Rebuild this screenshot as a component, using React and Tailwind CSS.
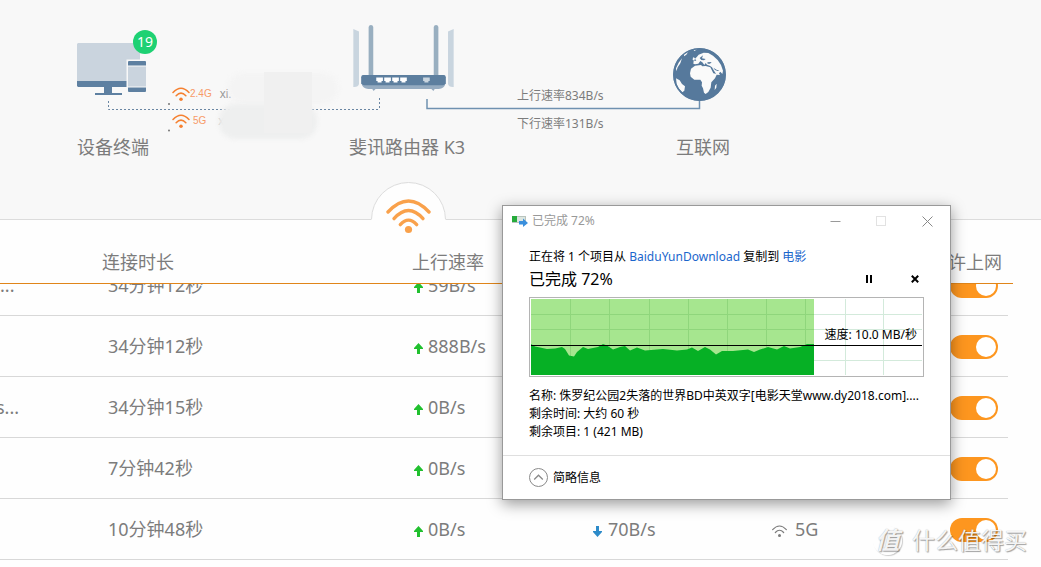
import React from "react";

function Wifi({ className, arcs = 3, stroke = 3.4 }) {
  return (
    <svg viewBox="0 0 45 36" className={className} fill="none" stroke="currentColor" strokeWidth={stroke} strokeLinecap="round" aria-hidden="true">
      <path d="M2 14Q22.5-8 43 14" />
      <path d={arcs === 3 ? "M8 20.6Q22.5 4.3 37 20.6" : "M10 22.500Q22.5 9 35 22.500"} />
      {arcs === 3 && <path d="M14.3 26.6Q22.5 17.7 30.7 26.6" />}
      <circle cx="22.5" cy="31.500" r={arcs === 3 ? 3.6 : 4.5} fill="currentColor" stroke="none" />
    </svg>
  );
}

function Arrow({ down, className }) {
  return (
    <svg viewBox="0 0 9 11" className={className} fill="currentColor" aria-hidden="true">
      <path d={down ? "M3 0H6V5H9V6L4.5 11L0 6V5H3Z" : "M3 11H6V6H9V5L4.5 0L0 5V6H3Z"} />
    </svg>
  );
}

function Devices() {
  return (
    <svg viewBox="0 0 70 53" className="h-[53px] w-[70px]" aria-hidden="true">
      <path d="M1 0H62L63 1V39H0V1Z" fill="#cad4de" />
      <path d="M0 38H63V43L62 44H1L0 43Z" fill="#5e80a1" />
      <path d="M27 44H35V50H45V52H18V50H27Z" fill="#5e80a1" />
      <rect x="49.500" y="16.500" width="20.500" height="34" fill="#f8f8f8" />
      <rect x="51" y="18" width="18" height="31" rx="1" fill="#5e80a1" />
      <rect x="51" y="23" width="18" height="21" fill="#cad4de" />
      <rect x="51" y="22.500" width="18" height="1" fill="#f8f8f8" />
      <rect x="51" y="43.500" width="18" height="1" fill="#f8f8f8" />
    </svg>
  );
}

function Router() {
  const ports = [118, 142, 166, 190];
  return (
    <svg viewBox="38 45 304 198" className="h-[66px] w-[101px]" aria-hidden="true">
      <path d="M39 57L56 64V222Q54 232 39 231Z" fill="#c9d5df" />
      <path d="M341 57L324 64V222Q326 232 341 231Z" fill="#c9d5df" />
      <path d="M85 195V51Q86 45 92 45T99 51V195Z" fill="#99afc0" />
      <path d="M281 195V51Q282 45 288 45T295 51V195Z" fill="#99afc0" />
      <path d="M70 195H310Q317 195 317 202V220Q312 237 296 237H284L280 243L274 237H106L100 243L96 237H84Q68 237 63 220V202Q63 195 70 195Z" fill="#95abc0" />
      <path d="M70 195H310Q317 195 317 202V220Q314 226 308 226H72Q66 226 63 220V202Q63 195 70 195Z" fill="#5d7f9f" />
      {ports.map((x) => (
        <path key={x} d={`M${x - 10} 203H${x + 10}V213H${x + 6}V218H${x - 6}V213H${x - 10}Z`} fill="#fff" />
      ))}
      <path d="M249 203H269V213H265V218H253V213H249Z" fill="#c9d5df" />
    </svg>
  );
}

function Globe() {
  return (
    <svg viewBox="0 0 159 159" className="size-[53px]" aria-hidden="true">
      <circle cx="79.500" cy="79.500" r="79" fill="#56799c" />
      <path d="M54 62L66 53L84 51L88 55L98 54L112 58L121 76L132 78L126 91L115 103L113 119L106 132L98 138L93 134L90 121L86 113L87 103L82 95L64 95L53 86L51 76Z" fill="#fafafa" />
      <path d="M61 47L62 39L70 38L66 32L72 26L77 20L92 14L106 15L120 23L134 36L144 51L150 68L148 78L142 71L138 76L141 81L131 80L123 68L117 58L110 53L102 50L98 45L94 51L88 43L82 39L76 47L66 49Z" fill="#fafafa" />
      <path d="M80 30L90 22L87 31L98 33L93 37L85 36ZM103 43L116 42L111 47L104 47ZM121 59L132 66L139 66L134 69L126 66Z" fill="#56799c" />
      <path d="M60 28L66 30L64 38L59 36ZM9 91L20 97L27 108L36 115L34 128L28 133L18 122L11 108Z" fill="#fafafa" />
      <path d="M9 61L17 44L27 31L22 46L14 58L10 70ZM33 19L47 10L40 20L33 25ZM126 113L131 107L130 119L125 126ZM60 4L73 4L64 9Z" fill="#fafafa" />
      <circle cx="79.500" cy="79.500" r="77" fill="none" stroke="#56799c" strokeWidth="4.500" />
    </svg>
  );
}

function Topology() {
  return (
    <section className="relative h-[220px] border-b border-[#dcdcdc] bg-[#f8f8f8] text-lg text-[#7c7c7c]">
      <svg className="absolute left-0 top-0 h-[140px] w-[760px]" viewBox="0 0 760 140" fill="none" aria-hidden="true">
        <path d="M108.500 101V109.500H380M379.500 108V98" stroke="#6a86a3" strokeDasharray="2 2" />
        <path d="M427 99V108.500H699.500V100" stroke="#6f91b0" strokeWidth="1.500" />
        <circle cx="169" cy="104" r="1" fill="#777" />
        <circle cx="169" cy="130.500" r="1" fill="#777" />
      </svg>

      <div className="absolute left-[77px] top-[43px]">
        <Devices />
        <span className="absolute left-14 -top-[13px] flex size-6 items-center justify-center rounded-full bg-[#1ed173] text-sm text-white">19</span>
      </div>
      <p className="absolute left-[77px] top-[133px] leading-7">设备终端</p>

      <div className="absolute left-[172px] top-[86px] flex h-4 items-center font-['Liberation_Sans',sans-serif] text-[10px] text-[#f79a68]">
        <Wifi arcs={2} className="h-[14px] w-[18px] text-[#f58030]" stroke={4} />
        <span>2.4G</span>
        <span className="ml-2 text-xs text-[#999]">xi.</span>
      </div>
      <div className="absolute left-[172px] top-[113px] flex h-4 items-center font-['Liberation_Sans',sans-serif] text-[10px] text-[#f79a68]">
        <Wifi arcs={2} className="h-[14px] w-[18px] text-[#f58030]" stroke={4} />
        <span className="ml-[3px]">5G</span>
        <span className="ml-3 text-xs text-[#bbb]">x</span>
      </div>
      <div className="absolute left-[228px] top-[73px] h-[31px] w-[110px] rounded-2xl bg-[#f4f4f4] blur-[2px]" />
      <div className="absolute left-[219px] top-[104px] h-[35px] w-[98px] rounded-2xl bg-[#eeefef] blur-[2px]" />
      <div className="absolute left-[264px] top-[72px] h-[61px] w-12 bg-[#f0f0f0]" />

      <div className="absolute left-[353px] top-[25px]"><Router /></div>
      <p className="absolute left-[349px] top-[133px] leading-7">斐讯路由器 K3</p>

      <div className="absolute left-[517px] top-[82px] text-xs leading-7">
        <p>上行速率834B/s</p>
        <p>下行速率131B/s</p>
      </div>

      <div className="absolute left-[673px] top-[48px]"><Globe /></div>
      <p className="absolute left-[676px] top-[133px] leading-7">互联网</p>

      <div className="absolute left-[371px] top-[182px] text-[#f9a14b]">
        <svg viewBox="0 0 75 40" className="h-10 w-[75px]" aria-hidden="true">
          <path d="M0 37.500A37.500 37 0 0 1 75 37.500V40H0Z" fill="#fefefe" />
          <path d="M.5 37.500A37 37 0 0 1 74.500 37.500" fill="none" stroke="#dcdcdc" />
        </svg>
        <Wifi className="absolute left-[15px] top-4 h-9 w-[45px]" />
      </div>
    </section>
  );
}

const rows = [
  { name: "...", time: "34分钟12秒", up: "59B/s", clipped: true },
  { name: "", time: "34分钟12秒", up: "888B/s" },
  { name: "s...", time: "34分钟15秒", up: "0B/s" },
  { name: "", time: "7分钟42秒", up: "0B/s" },
  { name: "", time: "10分钟48秒", up: "0B/s", down: "70B/s", band: "5G" },
];

function Cell({ clipped, className = "", children }) {
  return (
    <div className={clipped ? "flex h-8 items-end overflow-hidden border-b border-[#d8d8d8]" : "flex h-[61px] items-end border-b border-[#d8d8d8]"}>
      <div className={`flex h-[60px] shrink-0 items-center ${className}`}>{children}</div>
    </div>
  );
}

function DeviceTable() {
  return (
    <div className="mr-7">
      <table className="w-full table-fixed border-collapse text-left text-lg text-[#7c7c7c]">
        <colgroup>
          <col className="w-[102px]" />
          <col className="w-[310px]" />
          <col className="w-[181px]" />
          <col className="w-[179px]" />
          <col className="w-[158px]" />
          <col />
        </colgroup>
        <thead>
          <tr>
            {["", "连接时长", "上行速率", "", "", "允许上网"].map((label, i) => (
              <th key={i} scope="col" className="bg-[#e0851a] p-0 pb-px font-normal">
                <div className="flex h-[63px] items-center whitespace-nowrap bg-[#fefefe] pt-5">{label}</div>
              </th>
            ))}
          </tr>
        </thead>
        <tbody>
          {rows.map((r, i) => (
            <tr key={i}>
              <td className="p-0"><Cell clipped={r.clipped} className={r.clipped ? "" : "-ml-1"}>{r.name}</Cell></td>
              <td className="p-0"><Cell clipped={r.clipped} className="pl-[6px]">{r.time}</Cell></td>
              <td className="p-0">
                <Cell clipped={r.clipped} className="gap-[5px] pl-[2px]">
                  <Arrow className="mt-1 h-[11px] w-[9px] text-[#21c02f]" />
                  {r.up}
                </Cell>
              </td>
              <td className="p-0">
                <Cell clipped={r.clipped} className="gap-[6px]">
                  {r.down && <Arrow down className="mt-1 h-[11px] w-[9px] text-[#2d8bc9]" />}
                  {r.down}
                </Cell>
              </td>
              <td className="p-0">
                <Cell clipped={r.clipped} className="gap-2">
                  {r.band && <Wifi arcs={2} className="mt-1 h-3 w-[15px]" stroke={3.6} />}
                  {r.band}
                </Cell>
              </td>
              <td className="p-0 pr-[5px]">
                <Cell clipped={r.clipped} className="pl-5 pt-[2px]">
                  <input
                    type="checkbox"
                    role="switch"
                    defaultChecked
                    aria-label="允许上网"
                    className="flex h-6 w-12 appearance-none items-center rounded-full bg-[#ccc] px-[2px] before:block before:size-5 before:rounded-full before:bg-white checked:justify-end checked:bg-[#fd961f]"
                  />
                </Cell>
              </td>
            </tr>
          ))}
        </tbody>
      </table>
    </div>
  );
}

function SpeedGraph() {
  const vertical = [41, 80, 120, 159, 198, 237, 276, 316, 354];
  const horizontal = [17, 32, 63];
  return (
    <div className="relative mt-[6px] h-20 border border-[#b4b4b4]">
      <svg viewBox="1 1 393 78" preserveAspectRatio="none" className="h-full w-full" aria-hidden="true">
        <rect x="2" y="2" width="283" height="76" fill="#a6e68f" />
        {vertical.map((x) => (
          <path key={x} d={`M${x}.500 2V78`} stroke={x < 285 ? "#8fd67c" : "#d3eadb"} />
        ))}
        {horizontal.map((y) => (
          <React.Fragment key={y}>
            <path d={`M2 ${y}.500H285`} stroke="#8fd67c" />
            <path d={`M285 ${y}.500H393`} stroke="#d3eadb" />
          </React.Fragment>
        ))}
        <path
          d="M2 47L6 49.500L11 50.500L18 52L26 51.500L33 50L36 52L40 58.500L45 59.500L48 55L54 50L59 52L69 50L74 47L78 48.500L84 52.500L91 50L96 49L101 53.500L108 50.500L116 53.500L134 52L148 53.500L158 52.500L163 50.500L169 54L176 50L181 52.500L187 57.500L193 54L204 54L219 52.500L225 55L231 52.500L239 50L248 52.500L255 49L261 51.500L271 50L278 47L285 47V78H2Z"
          fill="#06b025"
        />
        <path d="M2 48.500H393" stroke="#000" />
      </svg>
      <span className="absolute right-[6px] top-[27px] whitespace-nowrap leading-5">速度: 10.0 MB/秒</span>
    </div>
  );
}

function CopyDialog() {
  return (
    <div role="dialog" aria-label="已完成 72%" className="absolute left-[502px] top-[205px] w-[449px] border border-[#999] bg-white text-xs text-black shadow-[0_4px_14px_rgba(0,0,0,0.4)]">
      <div className="flex h-[30px] items-center pl-[9px] text-[#999]">
        <svg viewBox="0 0 16 12" className="h-3 w-4" aria-hidden="true">
          <rect x=".5" y="1.500" width="13" height="6" fill="#dce6e0" stroke="#b9c4be" />
          <rect y="1" width="5" height="6" fill="#27ab3c" />
          <path d="M7 6H11V3.500L16 8L11 12V9.500H7Z" fill="#3a8fdc" />
        </svg>
        <span className="ml-1 flex-1">已完成 72%</span>
        <button type="button" aria-label="最小化" className="flex h-full w-[46px] items-center justify-center">
          <svg viewBox="0 0 11 11" className="size-[11px]" aria-hidden="true"><path d="M.5 5.500H10.500" stroke="#999" /></svg>
        </button>
        <button type="button" aria-label="最大化" disabled className="flex h-full w-[46px] items-center justify-center">
          <svg viewBox="0 0 11 11" className="size-[11px]" aria-hidden="true"><rect x=".5" y=".5" width="9" height="9" fill="none" stroke="#e2e2e2" /></svg>
        </button>
        <button type="button" aria-label="关闭" className="flex h-full w-[46px] items-center justify-center">
          <svg viewBox="0 0 11 11" className="size-[11px]" aria-hidden="true"><path d="M.5 .5L10.500 10.500M10.500 .5L.5 10.500" stroke="#888" /></svg>
        </button>
      </div>

      <div className="px-[26px] pb-[14px] pt-[11px]">
        <p className="whitespace-nowrap leading-5">
          正在将 1 个项目从 <a href="#source" className="text-[#1a66cc]">BaiduYunDownload</a> 复制到 <a href="#target" className="text-[#1a66cc]">电影</a>
        </p>
        <div className="flex h-6 items-center">
          <p className="flex-1 text-base leading-6">已完成 72%</p>
          <button type="button" aria-label="暂停" className="mr-9 flex size-[10px] items-center justify-center">
            <svg viewBox="0 0 8 8" className="size-2" aria-hidden="true"><path d="M1 0H3V8H1ZM5 0H7V8H5Z" /></svg>
          </button>
          <button type="button" aria-label="取消" className="mr-1 flex size-[10px] items-center justify-center">
            <svg viewBox="0 0 8 8" className="size-2" aria-hidden="true"><path d="M.8 .8L7.200 7.200M7.200 .8L.8 7.200" stroke="#000" strokeWidth="2" /></svg>
          </button>
        </div>
        <SpeedGraph />
        <div className="mt-[10px] whitespace-nowrap leading-[18px]">
          <p>名称: 侏罗纪公园2失落的世界BD中英双字[电影天堂www.dy2018.com]....</p>
          <p>剩余时间: 大约 60 秒</p>
          <p>剩余项目: 1 (421 MB)</p>
        </div>
      </div>

      <div className="flex h-11 items-center border-t border-[#dfdfdf] px-[26px]">
        <button type="button" className="flex items-center gap-[5px]">
          <svg viewBox="0 0 19 19" className="size-[19px]" fill="none" stroke="#8a8a8a" aria-hidden="true">
            <circle cx="9.500" cy="9.500" r="9" />
            <path d="M5.200 11.500L9.500 7.200L13.800 11.500" strokeWidth="1.300" />
          </svg>
          简略信息
        </button>
      </div>
    </div>
  );
}

function Watermark() {
  return (
    <div className="absolute left-[873px] top-[522px] flex h-9 items-center gap-[10px] whitespace-nowrap text-[23px] text-white/90 [text-shadow:1px_1px_1px_rgba(0,0,0,0.35),0_0_1px_rgba(0,0,0,0.35)]">
      <span className="flex size-[29px] items-center justify-center rounded-full border border-white text-2xl font-bold italic shadow-[1px_1px_1px_rgba(0,0,0,0.2)]">值</span>
      <span>什么值得买</span>
    </div>
  );
}

export default function App() {
  return (
    <main className="relative min-h-screen overflow-hidden bg-[#fefefe] font-['Noto_Sans','Noto_Sans_CJK_SC',sans-serif]">
      <Topology />
      <DeviceTable />
      <CopyDialog />
      <Watermark />
    </main>
  );
}
